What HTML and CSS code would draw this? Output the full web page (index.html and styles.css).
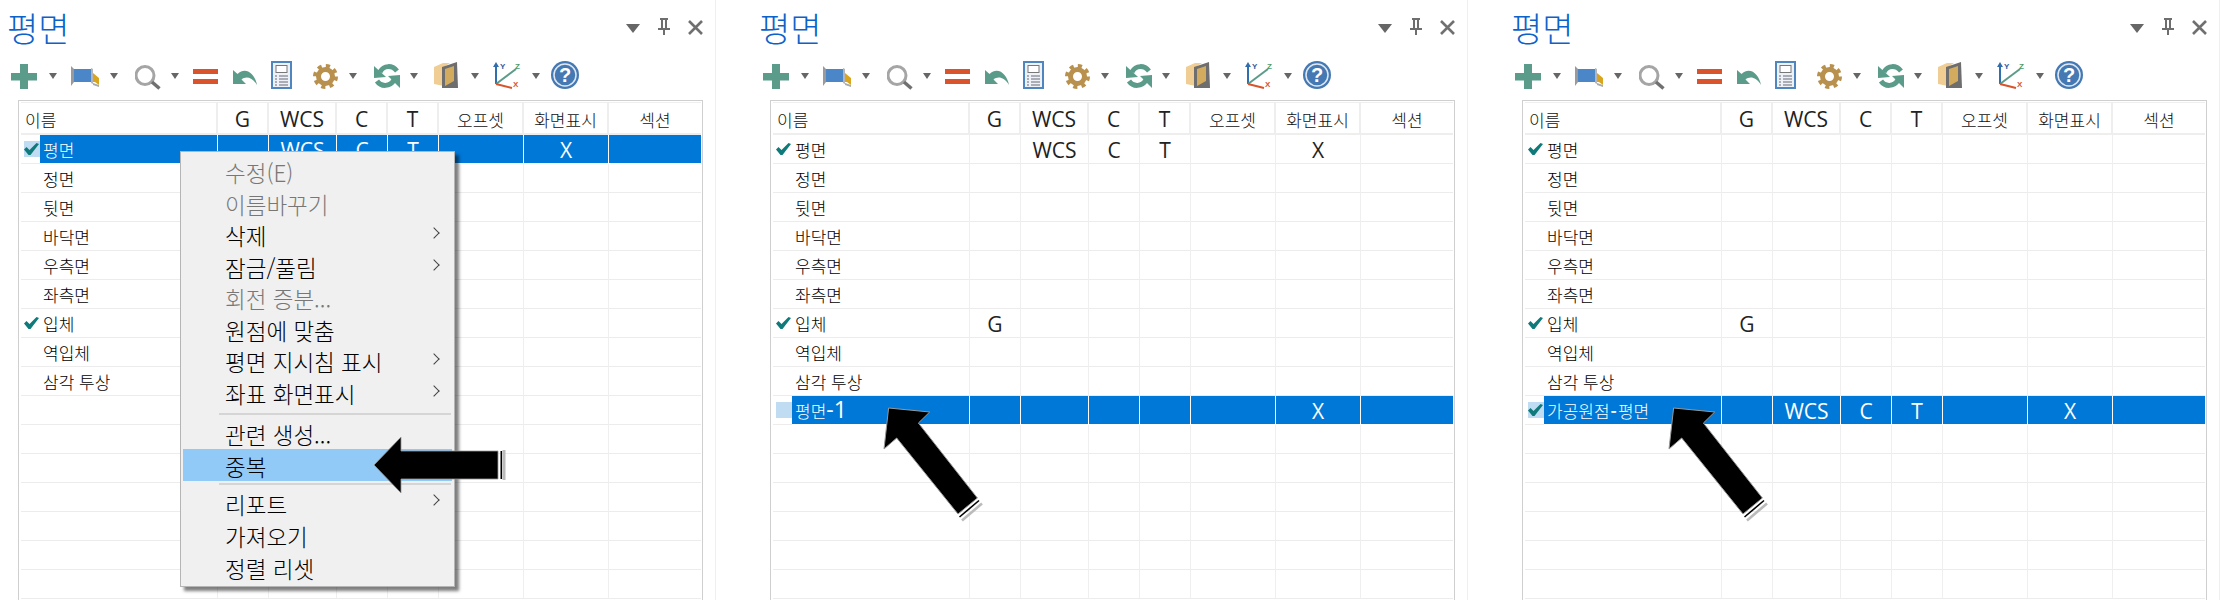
FILE: index.html
```html
<!DOCTYPE html>
<html lang="ko">
<head>
    <meta charset="UTF-8">
    <title>평면</title>
    <link rel="stylesheet" href="styles.css">
</head>
<body>
    <!-- Shared icon drawings -->
    <svg class="icon-defs" width="0" height="0">
        <defs>
            <polygon id="i-caret" points="0,13 8,13 4,19" fill="#666"/>
            <g id="i-plus" fill="#5b9b89"><rect x="9" y="4" width="8" height="25"/><rect x="0" y="13" width="26" height="7.5"/></g>
            <g id="i-flag">
                <polygon points="0,6 3,9 3,22 0,26" fill="#9a9a9a"/>
                <rect x="3" y="9" width="17" height="13" fill="#4a86c8"/>
                <polygon points="20,8 22,9 22,24 20,23" fill="#b5b5b5"/>
                <polygon points="22,13 28,18 28,25 24,22 22,22" fill="#d9a520"/>
                <polygon points="22,23 28,25 28,27 22,25" fill="#aaa"/>
            </g>
            <g id="i-search">
                <circle cx="10" cy="15.5" r="9" fill="none" stroke="#a5a5a5" stroke-width="3"/>
                <line x1="17" y1="22" x2="24.5" y2="28.5" stroke="#707070" stroke-width="3.5"/>
            </g>
            <g id="i-equals" fill="#d9532c"><rect x="0" y="9" width="25" height="5"/><rect x="0" y="19" width="25" height="5"/></g>
            <path id="i-undo" d="M1 10 V24 H14 L9.5 19.5 C14 16 20 17 25 25 C23 14 14 6 5.5 14 Z" fill="#5b9b89"/>
            <g id="i-sheet">
                <rect x="0" y="1" width="21" height="28" fill="#4f86c0"/>
                <rect x="2" y="3" width="17" height="24" fill="#eef2f6"/>
                <rect x="5" y="5.5" width="11" height="7" fill="#fff" stroke="#777"/>
                <path d="M4 16 H6 M8 16 H17 M4 19 H6 M8 19 H17 M4 22 H6 M8 22 H17 M4 25 H6 M8 25 H17" stroke="#667" fill="none"/>
            </g>
            <g id="i-gear" fill="none" stroke="#b9914f">
                <circle cx="12.5" cy="16.5" r="7" stroke-width="5"/>
                <circle cx="12.5" cy="16.5" r="10.5" stroke-width="4" stroke-dasharray="4.1 4.15"/>
            </g>
            <g id="i-refresh">
                <path d="M23 11 C18 5 10 5 6 12" fill="none" stroke="#5b9b89" stroke-width="5"/>
                <polygon points="0,6 12,17 0,18" fill="#5b9b89"/>
                <path d="M3 21 C7 27 16 27 20 20" fill="none" stroke="#5b9b89" stroke-width="5"/>
                <polygon points="26,28 14,16 26,15" fill="#5b9b89"/>
            </g>
            <g id="i-box">
                <polygon points="0,7 9,3 16,3 10,7 10,26 0,24" fill="#f0cd92"/>
                <polygon points="8,7 23,2 24,28 8,28" fill="#6e6e6e"/>
                <polygon points="11,9 20,6 20,21 11,26" fill="#d2ab5f"/>
            </g>
            <g id="i-axes">
                <path d="M3 24 V6" stroke="#2f6fb0" stroke-width="2"/>
                <polygon points="0,7 3,2 6,7" fill="#2f6fb0"/>
                <path d="M3 24 L23 9" stroke="#5b9b89" stroke-width="2"/>
                <path d="M3 24 L19 28" stroke="#d9532c" stroke-width="2"/>
                <text class="axis-label" x="7" y="9" fill="#2f5f9f">Y</text>
                <text class="axis-label" x="22" y="9" fill="#4a9a70">Z</text>
                <text class="axis-label" x="20" y="27" fill="#d9532c">X</text>
            </g>
            <g id="i-help">
                <circle cx="14" cy="15" r="14" fill="#4479b3"/>
                <circle cx="14" cy="15" r="11" fill="none" stroke="#dfe8f2" stroke-width="1.5"/>
                <text class="help-label" x="14" y="22" text-anchor="middle" fill="#fff">?</text>
            </g>
            <polygon id="i-menu" points="0,0 14,0 7,9" fill="#666"/>
            <g id="i-pin" fill="#6e6e6e">
                <path d="M2 0 H10 V2 H9 V10 H12 V12 H7 V17 H5 V12 H0 V10 H3 V2 H2 Z M5 2 V10 H7 V2 Z" fill-rule="evenodd"/>
            </g>
            <path id="i-close" d="M1 1 L14 14 M14 1 L1 14" stroke="#707070" stroke-width="2.6" fill="none"/>
            <path id="i-check" d="M0 6.5 L2.5 4 L5.5 7 L12.5 0 L15 1 L6.5 12 L4.5 12 Z" fill="#0f7a7a"/>
            <g id="i-arrow-up">
                <polygon points="8.6,4 49.7,8 38.4,19 97.4,94 78,110 16.7,34 4,45" fill="#000" stroke="#999" stroke-width="1"/>
                <line x1="99" y1="96.5" x2="79.5" y2="113" stroke="#000" stroke-width="1.6"/>
                <line x1="102" y1="99.5" x2="82" y2="116.5" stroke="#bbb" stroke-width="2.6"/>
            </g>
        </defs>
    </svg>

    <!-- Panel 1: context menu open -->
    <section class="panel panel-first">
        <header class="title-bar">
            <h1 class="title">평면</h1>
            <div class="win-btns">
                <svg width="14" height="9"><use href="#i-menu"/></svg>
                <svg width="12" height="17"><use href="#i-pin"/></svg>
                <svg width="15" height="15"><use href="#i-close"/></svg>
            </div>
        </header>
        <div class="toolbar">
            <svg width="28" height="32"><use href="#i-plus"/></svg>
            <svg width="12" height="32"><use href="#i-caret"/></svg>
            <svg width="29" height="32"><use href="#i-flag"/></svg>
            <svg width="15" height="32"><use href="#i-caret"/></svg>
            <svg width="26" height="32"><use href="#i-search"/></svg>
            <svg width="12" height="32"><use href="#i-caret"/></svg>
            <svg width="29" height="32"><use href="#i-equals"/></svg>
            <svg width="29" height="32"><use href="#i-undo"/></svg>
            <svg width="32" height="32"><use href="#i-sheet"/></svg>
            <svg width="26" height="32"><use href="#i-gear"/></svg>
            <svg width="15" height="32"><use href="#i-caret"/></svg>
            <svg width="26" height="32"><use href="#i-refresh"/></svg>
            <svg width="14" height="32"><use href="#i-caret"/></svg>
            <svg width="27" height="32"><use href="#i-box"/></svg>
            <svg width="12" height="32"><use href="#i-caret"/></svg>
            <svg width="29" height="32"><use href="#i-axes"/></svg>
            <svg width="9" height="32"><use href="#i-caret"/></svg>
            <svg width="28" height="32"><use href="#i-help"/></svg>
        </div>
        <div class="grid-wrap">
            <table class="grid">
                <colgroup><col class="c-check"><col class="c-name"><col class="c-g"><col class="c-wcs"><col class="c-g"><col class="c-g"><col class="c-wide"><col class="c-wide"><col class="c-last"></colgroup>
                <thead>
                    <tr><th colspan="2" class="th-name">이름</th><th class="val">G</th><th class="val">WCS</th><th class="val">C</th><th class="val">T</th><th>오프셋</th><th>화면표시</th><th>섹션</th></tr>
                </thead>
                <tbody>
                    <tr class="selected"><td class="check on"><svg width="15" height="12"><use href="#i-check"/></svg></td><td class="name">평면</td><td></td><td class="val">WCS</td><td class="val">C</td><td class="val">T</td><td></td><td class="val">X</td><td></td></tr>
                    <tr><td></td><td class="name">정면</td><td></td><td></td><td></td><td></td><td></td><td></td><td></td></tr>
                    <tr><td></td><td class="name">뒷면</td><td></td><td></td><td></td><td></td><td></td><td></td><td></td></tr>
                    <tr><td></td><td class="name">바닥면</td><td></td><td></td><td></td><td></td><td></td><td></td><td></td></tr>
                    <tr><td></td><td class="name">우측면</td><td></td><td></td><td></td><td></td><td></td><td></td><td></td></tr>
                    <tr><td></td><td class="name">좌측면</td><td></td><td></td><td></td><td></td><td></td><td></td><td></td></tr>
                    <tr><td class="check"><svg width="15" height="12"><use href="#i-check"/></svg></td><td class="name">입체</td><td class="val">G</td><td></td><td></td><td></td><td></td><td></td><td></td></tr>
                    <tr><td></td><td class="name">역입체</td><td></td><td></td><td></td><td></td><td></td><td></td><td></td></tr>
                    <tr><td></td><td class="name">삼각 투상</td><td></td><td></td><td></td><td></td><td></td><td></td><td></td></tr>
                    <tr><td></td><td></td><td></td><td></td><td></td><td></td><td></td><td></td><td></td></tr>
                    <tr><td></td><td></td><td></td><td></td><td></td><td></td><td></td><td></td><td></td></tr>
                    <tr><td></td><td></td><td></td><td></td><td></td><td></td><td></td><td></td><td></td></tr>
                    <tr><td></td><td></td><td></td><td></td><td></td><td></td><td></td><td></td><td></td></tr>
                    <tr><td></td><td></td><td></td><td></td><td></td><td></td><td></td><td></td><td></td></tr>
                    <tr><td></td><td></td><td></td><td></td><td></td><td></td><td></td><td></td><td></td></tr>
                    <tr><td></td><td></td><td></td><td></td><td></td><td></td><td></td><td></td><td></td></tr>
                </tbody>
            </table>
        </div>

        <ul class="menu">
            <li class="disabled">수정(E)</li>
            <li class="disabled">이름바꾸기</li>
            <li class="sub">삭제</li>
            <li class="sub">잠금/풀림</li>
            <li class="disabled">회전 증분...</li>
            <li>원점에 맞춤</li>
            <li class="sub">평면 지시침 표시</li>
            <li class="sub">좌표 화면표시</li>
            <li class="sep"></li>
            <li>관련 생성...</li>
            <li class="hot">중복</li>
            <li class="sep sep-after-hot"></li>
            <li class="sub">리포트</li>
            <li>가져오기</li>
            <li>정렬 리셋</li>
        </ul>

        <!-- Callout arrow -->
        <svg class="arrow arrow-left" width="140" height="70">
            <polygon points="4,35 31,7 31,21 128,21 128,49 31,49 31,63" fill="#000" stroke="#999" stroke-width="0.8"/>
            <rect x="130.5" y="21" width="1.6" height="28" fill="#000"/>
            <rect x="132.5" y="20" width="3" height="30" fill="#bbb"/>
        </svg>
    </section>

    <!-- Panel 2: duplicated plane -->
    <section class="panel">
        <header class="title-bar">
            <h1 class="title">평면</h1>
            <div class="win-btns">
                <svg width="14" height="9"><use href="#i-menu"/></svg>
                <svg width="12" height="17"><use href="#i-pin"/></svg>
                <svg width="15" height="15"><use href="#i-close"/></svg>
            </div>
        </header>
        <div class="toolbar">
            <svg width="28" height="32"><use href="#i-plus"/></svg>
            <svg width="12" height="32"><use href="#i-caret"/></svg>
            <svg width="29" height="32"><use href="#i-flag"/></svg>
            <svg width="15" height="32"><use href="#i-caret"/></svg>
            <svg width="26" height="32"><use href="#i-search"/></svg>
            <svg width="12" height="32"><use href="#i-caret"/></svg>
            <svg width="29" height="32"><use href="#i-equals"/></svg>
            <svg width="29" height="32"><use href="#i-undo"/></svg>
            <svg width="32" height="32"><use href="#i-sheet"/></svg>
            <svg width="26" height="32"><use href="#i-gear"/></svg>
            <svg width="15" height="32"><use href="#i-caret"/></svg>
            <svg width="26" height="32"><use href="#i-refresh"/></svg>
            <svg width="14" height="32"><use href="#i-caret"/></svg>
            <svg width="27" height="32"><use href="#i-box"/></svg>
            <svg width="12" height="32"><use href="#i-caret"/></svg>
            <svg width="29" height="32"><use href="#i-axes"/></svg>
            <svg width="9" height="32"><use href="#i-caret"/></svg>
            <svg width="28" height="32"><use href="#i-help"/></svg>
        </div>
        <div class="grid-wrap">
            <table class="grid">
                <colgroup><col class="c-check"><col class="c-name"><col class="c-g"><col class="c-wcs"><col class="c-g"><col class="c-g"><col class="c-wide"><col class="c-wide"><col class="c-last"></colgroup>
                <thead>
                    <tr><th colspan="2" class="th-name">이름</th><th class="val">G</th><th class="val">WCS</th><th class="val">C</th><th class="val">T</th><th>오프셋</th><th>화면표시</th><th>섹션</th></tr>
                </thead>
                <tbody>
                    <tr><td class="check"><svg width="15" height="12"><use href="#i-check"/></svg></td><td class="name">평면</td><td></td><td class="val">WCS</td><td class="val">C</td><td class="val">T</td><td></td><td class="val">X</td><td></td></tr>
                    <tr><td></td><td class="name">정면</td><td></td><td></td><td></td><td></td><td></td><td></td><td></td></tr>
                    <tr><td></td><td class="name">뒷면</td><td></td><td></td><td></td><td></td><td></td><td></td><td></td></tr>
                    <tr><td></td><td class="name">바닥면</td><td></td><td></td><td></td><td></td><td></td><td></td><td></td></tr>
                    <tr><td></td><td class="name">우측면</td><td></td><td></td><td></td><td></td><td></td><td></td><td></td></tr>
                    <tr><td></td><td class="name">좌측면</td><td></td><td></td><td></td><td></td><td></td><td></td><td></td></tr>
                    <tr><td class="check"><svg width="15" height="12"><use href="#i-check"/></svg></td><td class="name">입체</td><td class="val">G</td><td></td><td></td><td></td><td></td><td></td><td></td></tr>
                    <tr><td></td><td class="name">역입체</td><td></td><td></td><td></td><td></td><td></td><td></td><td></td></tr>
                    <tr><td></td><td class="name">삼각 투상</td><td></td><td></td><td></td><td></td><td></td><td></td><td></td></tr>
                    <tr class="selected"><td class="check on"></td><td class="name">평면<span class="num">-1</span></td><td></td><td></td><td></td><td></td><td></td><td class="val">X</td><td></td></tr>
                    <tr><td></td><td></td><td></td><td></td><td></td><td></td><td></td><td></td><td></td></tr>
                    <tr><td></td><td></td><td></td><td></td><td></td><td></td><td></td><td></td><td></td></tr>
                    <tr><td></td><td></td><td></td><td></td><td></td><td></td><td></td><td></td><td></td></tr>
                    <tr><td></td><td></td><td></td><td></td><td></td><td></td><td></td><td></td><td></td></tr>
                    <tr><td></td><td></td><td></td><td></td><td></td><td></td><td></td><td></td><td></td></tr>
                    <tr><td></td><td></td><td></td><td></td><td></td><td></td><td></td><td></td><td></td></tr>
                </tbody>
            </table>
        </div>
        <svg class="arrow arrow-mid" width="110" height="122"><use href="#i-arrow-up"/></svg>
    </section>

    <!-- Panel 3: renamed plane -->
    <section class="panel">
        <header class="title-bar">
            <h1 class="title">평면</h1>
            <div class="win-btns">
                <svg width="14" height="9"><use href="#i-menu"/></svg>
                <svg width="12" height="17"><use href="#i-pin"/></svg>
                <svg width="15" height="15"><use href="#i-close"/></svg>
            </div>
        </header>
        <div class="toolbar">
            <svg width="28" height="32"><use href="#i-plus"/></svg>
            <svg width="12" height="32"><use href="#i-caret"/></svg>
            <svg width="29" height="32"><use href="#i-flag"/></svg>
            <svg width="15" height="32"><use href="#i-caret"/></svg>
            <svg width="26" height="32"><use href="#i-search"/></svg>
            <svg width="12" height="32"><use href="#i-caret"/></svg>
            <svg width="29" height="32"><use href="#i-equals"/></svg>
            <svg width="29" height="32"><use href="#i-undo"/></svg>
            <svg width="32" height="32"><use href="#i-sheet"/></svg>
            <svg width="26" height="32"><use href="#i-gear"/></svg>
            <svg width="15" height="32"><use href="#i-caret"/></svg>
            <svg width="26" height="32"><use href="#i-refresh"/></svg>
            <svg width="14" height="32"><use href="#i-caret"/></svg>
            <svg width="27" height="32"><use href="#i-box"/></svg>
            <svg width="12" height="32"><use href="#i-caret"/></svg>
            <svg width="29" height="32"><use href="#i-axes"/></svg>
            <svg width="9" height="32"><use href="#i-caret"/></svg>
            <svg width="28" height="32"><use href="#i-help"/></svg>
        </div>
        <div class="grid-wrap">
            <table class="grid">
                <colgroup><col class="c-check"><col class="c-name"><col class="c-g"><col class="c-wcs"><col class="c-g"><col class="c-g"><col class="c-wide"><col class="c-wide"><col class="c-last"></colgroup>
                <thead>
                    <tr><th colspan="2" class="th-name">이름</th><th class="val">G</th><th class="val">WCS</th><th class="val">C</th><th class="val">T</th><th>오프셋</th><th>화면표시</th><th>섹션</th></tr>
                </thead>
                <tbody>
                    <tr><td class="check"><svg width="15" height="12"><use href="#i-check"/></svg></td><td class="name">평면</td><td></td><td></td><td></td><td></td><td></td><td></td><td></td></tr>
                    <tr><td></td><td class="name">정면</td><td></td><td></td><td></td><td></td><td></td><td></td><td></td></tr>
                    <tr><td></td><td class="name">뒷면</td><td></td><td></td><td></td><td></td><td></td><td></td><td></td></tr>
                    <tr><td></td><td class="name">바닥면</td><td></td><td></td><td></td><td></td><td></td><td></td><td></td></tr>
                    <tr><td></td><td class="name">우측면</td><td></td><td></td><td></td><td></td><td></td><td></td><td></td></tr>
                    <tr><td></td><td class="name">좌측면</td><td></td><td></td><td></td><td></td><td></td><td></td><td></td></tr>
                    <tr><td class="check"><svg width="15" height="12"><use href="#i-check"/></svg></td><td class="name">입체</td><td class="val">G</td><td></td><td></td><td></td><td></td><td></td><td></td></tr>
                    <tr><td></td><td class="name">역입체</td><td></td><td></td><td></td><td></td><td></td><td></td><td></td></tr>
                    <tr><td></td><td class="name">삼각 투상</td><td></td><td></td><td></td><td></td><td></td><td></td><td></td></tr>
                    <tr class="selected"><td class="check on"><svg width="15" height="12"><use href="#i-check"/></svg></td><td class="name">가공원점<span class="dash">-</span>평면</td><td></td><td class="val">WCS</td><td class="val">C</td><td class="val">T</td><td></td><td class="val">X</td><td></td></tr>
                    <tr><td></td><td></td><td></td><td></td><td></td><td></td><td></td><td></td><td></td></tr>
                    <tr><td></td><td></td><td></td><td></td><td></td><td></td><td></td><td></td><td></td></tr>
                    <tr><td></td><td></td><td></td><td></td><td></td><td></td><td></td><td></td><td></td></tr>
                    <tr><td></td><td></td><td></td><td></td><td></td><td></td><td></td><td></td><td></td></tr>
                    <tr><td></td><td></td><td></td><td></td><td></td><td></td><td></td><td></td><td></td></tr>
                    <tr><td></td><td></td><td></td><td></td><td></td><td></td><td></td><td></td><td></td></tr>
                </tbody>
            </table>
        </div>
        <svg class="arrow arrow-last" width="110" height="122"><use href="#i-arrow-up"/></svg>
    </section>
</body>
</html>
```

FILE: styles.css
```css
/* General Styles */
html,
body {
    margin: 0;
    height: 600px;
    overflow: hidden;
}

body {
    display: flex;
    background-color: #ffffff;
    color: #000000;
    font-family: "Noto Sans CJK KR", "Noto Sans", sans-serif;
}

.icon-defs {
    position: absolute;
}

.axis-label {
    font: bold 8px "Liberation Sans", sans-serif;
}

.help-label {
    font: bold 20px "Liberation Sans", sans-serif;
}

/* Panels */
.panel {
    position: relative;
    box-sizing: border-box;
    width: 752px;
    height: 600px;
    padding-left: 43px;
    border-right: 1px solid #efefef;
}

.panel-first {
    width: 716px;
    padding-left: 7px;
}

/* Title Bar */
.title-bar {
    display: flex;
    align-items: flex-start;
    width: 696px;
    height: 60px;
}

.title {
    margin: 0;
    color: #0d62c9;
    font-size: 34px;
    font-weight: 300;
    line-height: 56px;
}

.win-btns {
    display: flex;
    align-items: flex-start;
    gap: 18px;
    margin: 18px 0 0 auto;
}

.win-btns svg:first-child {
    margin-top: 6px;
}

.win-btns svg:last-child {
    margin-top: 2px;
}

/* Toolbar */
.toolbar {
    display: flex;
    gap: 10px;
    height: 32px;
    padding-left: 4px;
}

/* Grid */
.grid-wrap {
    box-sizing: border-box;
    width: 685px;
    height: 500px;
    margin: 8px 0 0 11px;
    padding: 1px 1px 0 2px;
    border: 1px solid #cfcfcf;
    border-bottom: none;
    overflow: hidden;
}

.grid {
    border-collapse: separate;
    border-spacing: 0;
    table-layout: fixed;
    width: 680px;
}

.c-check { width: 19px; }
.c-name { width: 178px; }
.c-g { width: 51px; }
.c-wcs { width: 68px; }
.c-wide { width: 85px; }
.c-last { width: 92px; }

.grid th {
    box-sizing: border-box;
    height: 33px;
    padding: 2px 0 0;
    border-top: 1px solid #efefef;
    border-right: 2px solid #eeeeee;
    border-bottom: 2px solid #eeeeee;
    color: #111111;
    font-size: 17px;
    font-weight: 300;
    text-align: center;
}

.grid th:last-child {
    border-right: none;
}

.grid th.th-name {
    padding-left: 4px;
    text-align: left;
}

.grid td {
    box-sizing: border-box;
    height: 29px;
    padding: 2px 0 0;
    border-bottom: 1px solid #ececec;
    border-right: 1px solid #efefef;
    font-size: 17px;
    font-weight: 300;
    line-height: 24px;
    text-align: center;
}

.grid td:first-child {
    border-right: none;
}

.grid td:last-child {
    border-right: none;
}

.grid td.name {
    padding-left: 3px;
    text-align: left;
    white-space: nowrap;
}

.grid .val {
    color: #222222;
    font-family: "Open Sans", sans-serif;
    font-size: 21px;
    font-weight: 400;
    line-height: 24px;
}

.num {
    font-family: "Open Sans", sans-serif;
    font-size: 23px;
    font-weight: 400;
    line-height: 20px;
}

.dash {
    margin: 0 1px;
    font-weight: 700;
}

.check {
    vertical-align: middle;
}

.check svg {
    display: block;
    margin: 0 0 2px 3px;
}

/* Selected Row */
.selected td {
    border-bottom-color: #ffffff;
    background-color: #0078d7;
    color: #ffffff;
}

.selected td.val {
    color: #ffffff;
}

.selected td:not(:first-child) {
    border-right-color: #ffffff;
}

.selected td:last-child {
    border-right: none;
}

.selected td.check {
    background: linear-gradient(#c0dcf3, #c0dcf3) 3px 6px / 16px 16px no-repeat #ffffff;
    border-bottom-color: #ececec;
}

/* Context Menu */
.menu {
    position: absolute;
    left: 180px;
    top: 151px;
    box-sizing: border-box;
    width: 275px;
    height: 436px;
    margin: 0;
    padding: 5px 0 0;
    border: 1px solid #b5b5b5;
    background-color: #f0f0f0;
    box-shadow: 4px 4px 3px rgba(0, 0, 0, 0.5);
    font-size: 22.5px;
    font-weight: 300;
    line-height: 30px;
    list-style: none;
}

.menu li {
    position: relative;
    height: 31.5px;
    margin: 0 2px;
    padding-left: 42px;
}

.menu .sep ~ li {
    height: 32px;
    line-height: 35px;
}

.menu .disabled {
    color: #777777;
}

.menu .sub::after {
    content: "";
    position: absolute;
    right: 14px;
    top: 9px;
    width: 7px;
    height: 7px;
    border-top: 1px solid #444444;
    border-right: 1px solid #444444;
    transform: rotate(45deg);
}

.menu .sep,
.menu .sep ~ .sep {
    height: 2px;
    margin: 4px 3px 2px 38px;
    padding: 0;
    background-color: #d5d5d5;
}

.menu .sep ~ .sep-after-hot {
    margin-top: 2px;
}

.menu .hot {
    background-color: #91c9f7;
}

/* Callout Arrows */
.arrow {
    position: absolute;
}

.arrow-left {
    left: 370px;
    top: 430px;
}

.arrow-mid {
    left: 164px;
    top: 404px;
}

.arrow-last {
    left: 197px;
    top: 404px;
}
```
